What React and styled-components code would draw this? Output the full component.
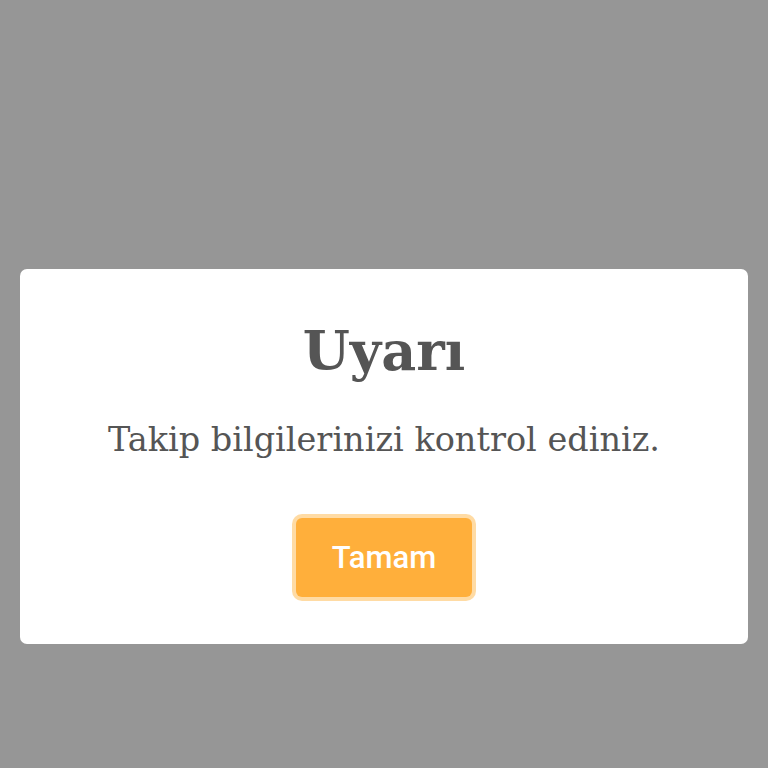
import styled, { createGlobalStyle } from "styled-components";

const GlobalStyle = createGlobalStyle`
  html, body {
    margin: 0;
    padding: 0;
    background: #969696;
  }
  * {
    box-sizing: border-box;
  }
`;

export default function App() {
  return (
    <>
      <GlobalStyle />
      <Overlay>
        <Dialog role="dialog">
          <Title>Uyarı</Title>
          <Message>Takip bilgilerinizi kontrol ediniz.</Message>
          <Actions>
            <ConfirmButton>Tamam</ConfirmButton>
          </Actions>
        </Dialog>
      </Overlay>
    </>
  );
}

const Overlay = styled.div`
  min-height: 768px;
  padding: 269px 20px 0;
  background: #969696;
`;

const Dialog = styled.div`
  width: 728px;
  height: 375px;
  background: #fff;
  border-radius: 7px;
  padding-top: 42px;
  display: flex;
  flex-direction: column;
  align-items: center;
`;

const Title = styled.h2`
  margin: 0;
  font-family: "DejaVu Serif", "Liberation Serif", serif;
  font-weight: bold;
  font-size: 54px;
  line-height: 80px;
  color: #555;
`;

const Message = styled.p`
  margin: 24px 0 0;
  font-family: "DejaVu Serif", "Liberation Serif", serif;
  font-size: 33.5px;
  line-height: 50px;
  color: #555;
`;

const Actions = styled.div`
  margin-top: 53px;
`;

const ConfirmButton = styled.button`
  width: 176px;
  height: 79px;
  border: none;
  border-radius: 6px;
  background: #ffaf3b;
  box-shadow: 0 0 0 4px rgba(255, 190, 90, 0.55);
  color: #fff;
  font-family: Roboto, "Noto Sans", sans-serif;
  font-weight: 500;
  font-size: 31px;
  cursor: pointer;
`;
